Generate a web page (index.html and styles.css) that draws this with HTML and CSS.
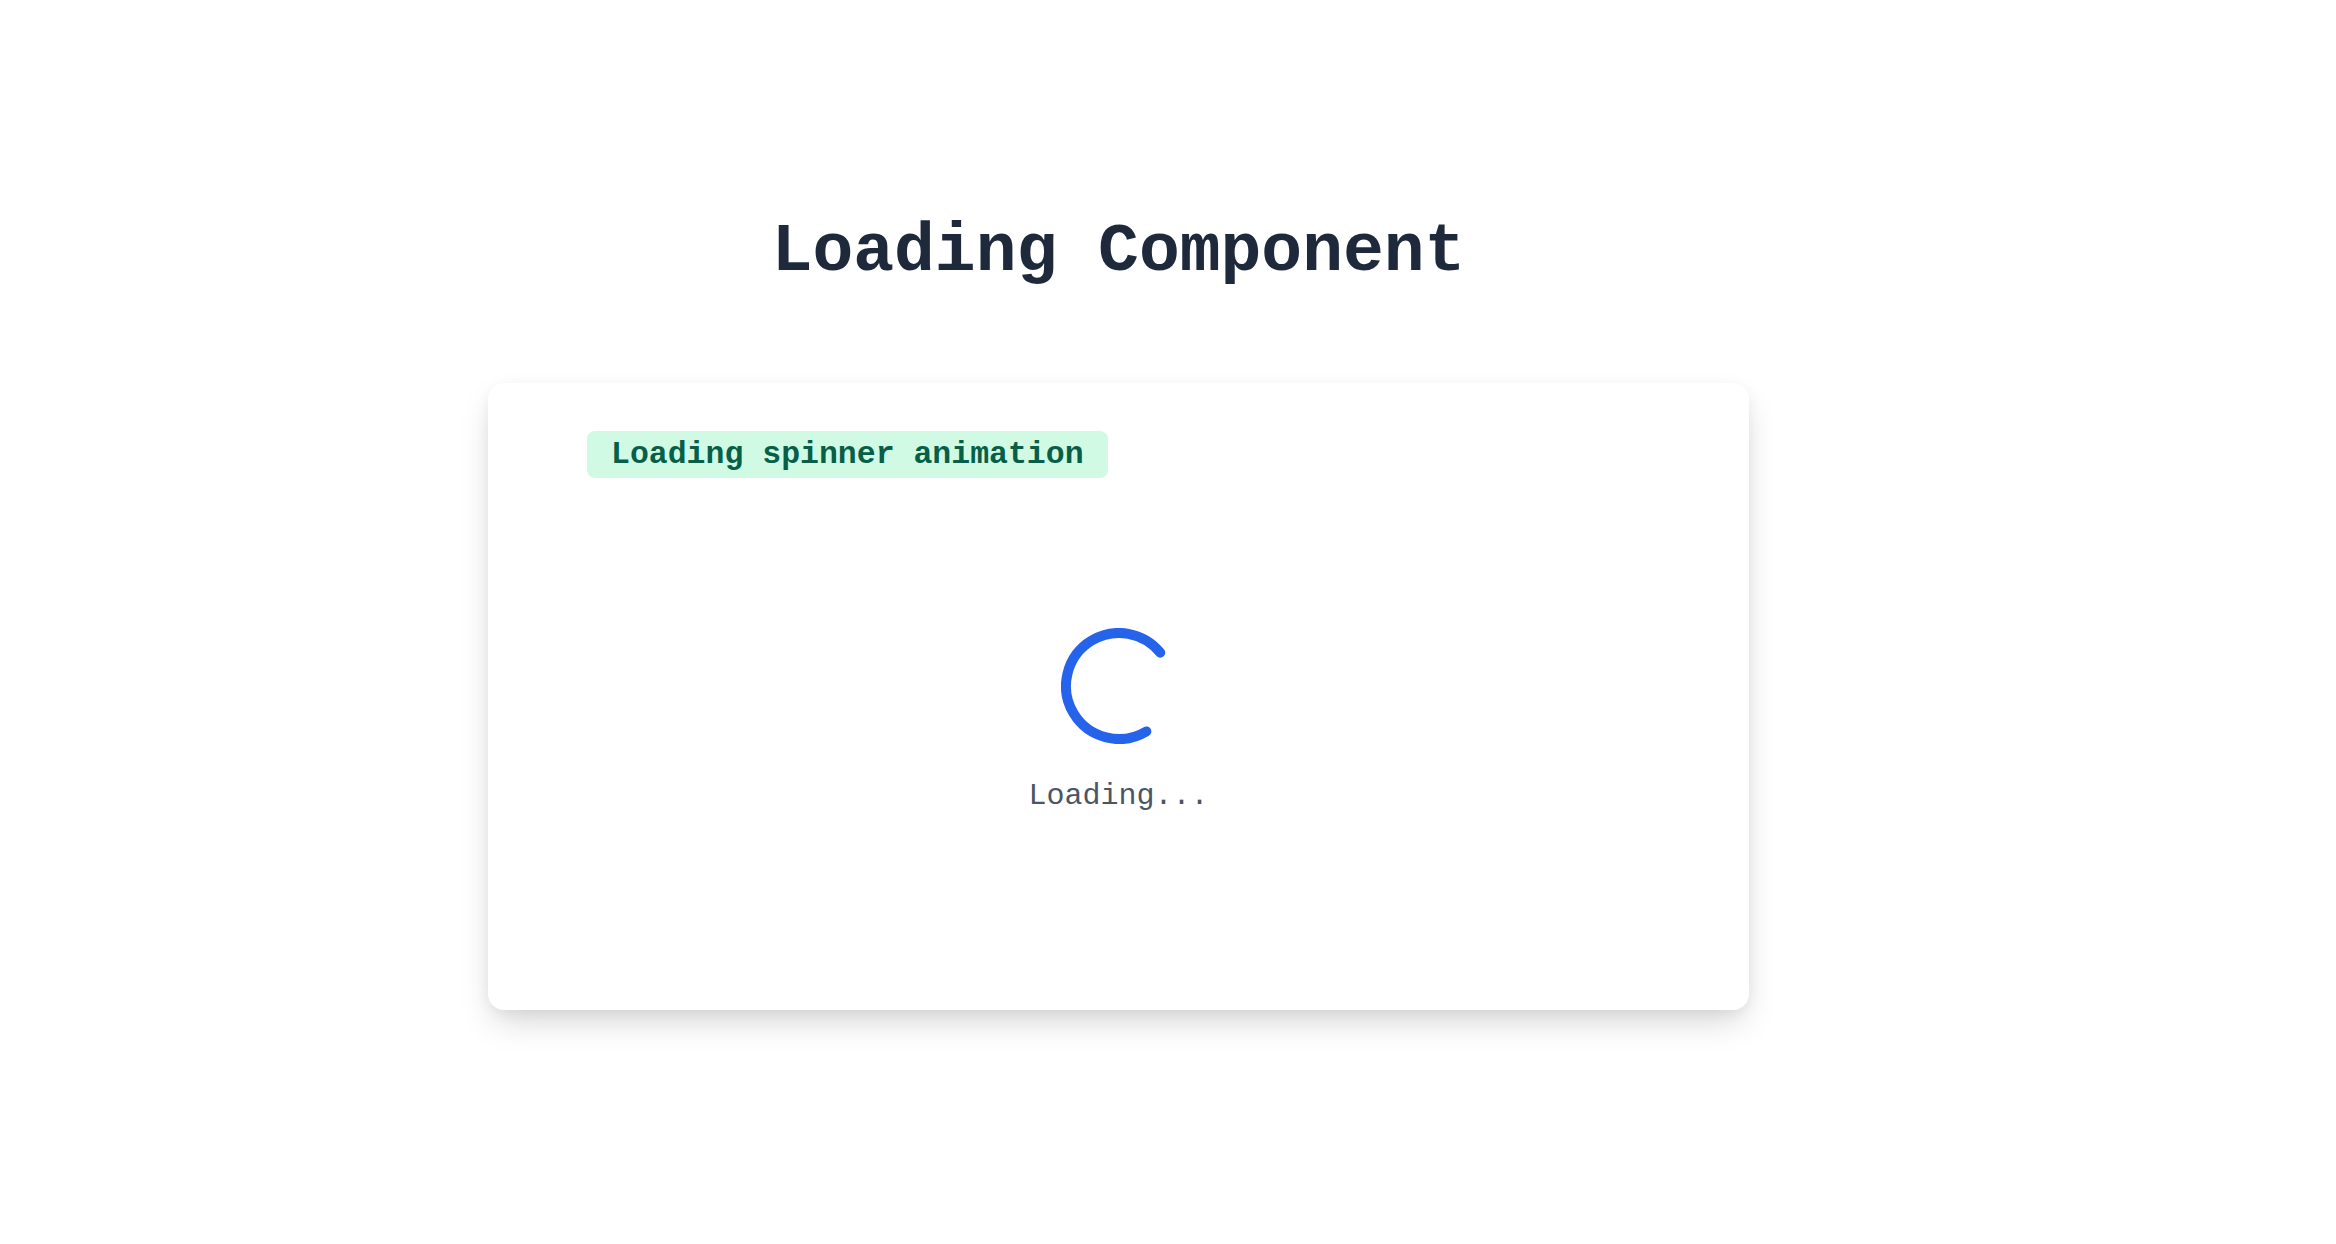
FILE: index.html
```html
<!DOCTYPE html>
<html lang="en">
<head>
  <meta charset="UTF-8">
  <meta name="viewport" content="width=device-width, initial-scale=1.0">
  <title>Loading Component</title>
  <link rel="stylesheet" href="styles.css">
</head>
<body>
  <main class="demo">
    <h1 class="demo-title">Loading Component</h1>

    <section class="demo-card">
      <span class="demo-tag">Loading spinner animation</span>

      <div class="loader">
        <svg class="loader-spinner" viewBox="0 0 116 116" aria-hidden="true">
          <circle cx="58" cy="58" r="53" transform="rotate(59 58 58)"/>
        </svg>
        <p class="loader-text">Loading...</p>
      </div>
    </section>
  </main>
</body>
</html>
```

FILE: styles.css
```css
*, *::before, *::after { box-sizing: border-box; }
html, body { min-height: 100%; }
body { margin: 0; min-height: 100vh; background-color: #fff; font-family: "Liberation Mono", "DejaVu Sans Mono", monospace; color: #1e293b; }

.demo { width: 1261px; margin-left: 488px; padding: 211px 0 120px; }

/* title */
.demo-title { margin: 0 0 90px; font-size: 68px; line-height: 1.2; font-weight: bold; text-align: center; color: #1e293b; }

/* card */
.demo-card {
  height: 627px;
  padding: 48px 99px;
  background-color: #fff;
  border-radius: 16px;
  box-shadow: 0 16px 34px -6px rgba(0,0,0,0.17), 0 4px 14px rgba(0,0,0,0.05);
}
.demo-tag {
  display: inline-block;
  padding: 6px 24px;
  font-size: 31.5px;
  line-height: 35px;
  font-weight: bold;
  color: #065f46;
  background-color: #d1fae5;
  border-radius: 8px;
}

/* spinner */
.loader { height: 478px; margin-top: 4px; display: flex; flex-direction: column; align-items: center; justify-content: center; gap: 34px; }
.loader-spinner { width: 116px; height: 116px; display: block; }
.loader-spinner circle { fill: none; stroke: #2563eb; stroke-width: 10; stroke-linecap: round; stroke-dasharray: 242 333; }
.loader-text { margin: 0; font-size: 30px; line-height: 36px; color: #4b5563; }
```
